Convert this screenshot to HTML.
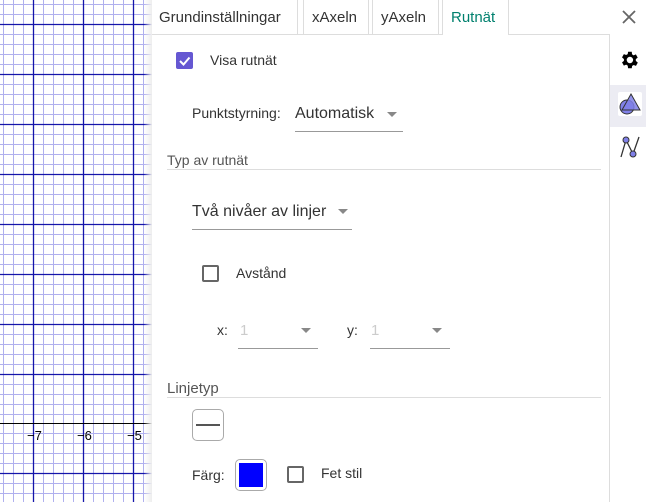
<!DOCTYPE html>
<html><head><meta charset="utf-8"><style>
body{margin:0;width:646px;height:502px;overflow:hidden;background:#fff;font-family:"Liberation Sans",Arial,sans-serif;position:relative;color:#333}
.a{position:absolute}
.t{font-size:14px;color:#333}
.cb{position:absolute;width:15px;height:15px;border:2px solid #666;border-radius:2px;box-sizing:border-box}
.dd{position:absolute;border-bottom:1px solid #999}
.arr{position:absolute;width:0;height:0;border-left:5px solid transparent;border-right:5px solid transparent;border-top:5px solid #888}
.hl{position:absolute;height:1px;background:#ddd;left:167px;width:434px}
</style></head><body>
<svg class="a" style="left:0;top:0" width="152" height="502">
<g stroke="#b0b0ee" stroke-width="1">
<path d="M3.5 0V502M13.5 0V502M23.5 0V502M43.5 0V502M53.5 0V502M63.5 0V502M73.5 0V502M93.5 0V502M103.5 0V502M113.5 0V502M123.5 0V502M143.5 0V502"/>
<path d="M0 4.5H152M0 14.5H152M0 34.5H152M0 44.5H152M0 54.5H152M0 64.5H152M0 84.5H152M0 94.5H152M0 104.5H152M0 114.5H152M0 134.5H152M0 144.5H152M0 154.5H152M0 164.5H152M0 184.5H152M0 194.5H152M0 204.5H152M0 214.5H152M0 234.5H152M0 244.5H152M0 254.5H152M0 264.5H152M0 284.5H152M0 294.5H152M0 304.5H152M0 314.5H152M0 334.5H152M0 344.5H152M0 354.5H152M0 364.5H152M0 384.5H152M0 394.5H152M0 404.5H152M0 414.5H152M0 433.5H152M0 443.5H152M0 453.5H152M0 463.5H152M0 483.5H152M0 493.5H152"/>
</g>
<g stroke="#1515aa" stroke-width="1.3">
<path d="M33.5 0V502M83.5 0V502M133.5 0V502"/>
<path d="M0 24.5H152M0 74.5H152M0 124.5H152M0 174.5H152M0 224.5H152M0 274.5H152M0 324.5H152M0 374.5H152M0 473.5H152"/>
</g>
<path d="M0 423.5H152" stroke="#000" stroke-width="1"/>
<g font-size="13" fill="#000" font-family="Liberation Sans,sans-serif">
<text x="27" y="440">−7</text><text x="77" y="440">−6</text><text x="127" y="440">−5</text>
</g>
</svg>
<div class="a" style="left:144px;top:0;width:8px;height:502px;background:linear-gradient(to right,rgba(255,255,255,0),#eee)"></div>
<div class="a" style="left:152px;top:0;width:494px;height:502px;background:#fff"></div>
<div class="a" style="left:152px;top:34px;width:458px;height:1px;background:#ddd"></div>
<div class="a" style="left:152px;top:0;width:145px;height:34px;border-right:1px solid #ddd"></div>
<div class="a" style="left:303px;top:0;width:64px;height:34px;border-left:1px solid #ddd;border-right:1px solid #ddd"></div>
<div class="a" style="left:372px;top:0;width:65px;height:34px;border-left:1px solid #ddd;border-right:1px solid #ddd"></div>
<div class="a" style="left:442px;top:0;width:65px;height:35px;border-left:1px solid #ddd;border-right:1px solid #ddd;background:#fff"></div>
<div class="a" style="left:609px;top:34px;width:1px;height:468px;background:#ddd"></div>
<div class="a" style="left:159px;top:9px;font-size:15px;color:#333">Grundinställningar</div>
<div class="a" style="left:312px;top:9px;font-size:15px;color:#333">xAxeln</div>
<div class="a" style="left:381px;top:9px;font-size:15px;color:#333">yAxeln</div>
<div class="a" style="left:451px;top:9px;font-size:15px;color:#00806e">Rutnät</div>
<svg class="a" style="left:621px;top:9px" width="16" height="16"><path d="M2 2L14 14M14 2L2 14" stroke="#666" stroke-width="1.8"/></svg>
<svg class="a" style="left:618px;top:49px" width="22" height="22" viewBox="0 0 24 24"><path fill="#000" d="M19.4 13a7.5 7.5 0 0 0 0-2l2.1-1.6-2-3.5-2.5 1a7 7 0 0 0-1.7-1L15 3h-4l-.4 2.6a7 7 0 0 0-1.7 1l-2.5-1-2 3.5L6.5 11a7.5 7.5 0 0 0 0 2l-2.1 1.6 2 3.5 2.5-1a7 7 0 0 0 1.7 1L11 21h4l.4-2.6a7 7 0 0 0 1.7-1l2.5 1 2-3.5zM13 15.5a3.5 3.5 0 1 1 0-7 3.5 3.5 0 0 1 0 7z"/></svg>
<div class="a" style="left:610px;top:85px;width:36px;height:42px;background:#ececf3"></div>
<svg class="a" style="left:617px;top:91px" width="26" height="26"><rect x="1" y="1" width="24" height="24" rx="2" fill="#fff"/><circle cx="10" cy="16" r="7" fill="#8080e8" stroke="#333" stroke-width="1"/><path d="M14 3L23 19H5Z" fill="#8080e8" stroke="#333" stroke-width="1" fill-opacity=".85"/></svg>
<svg class="a" style="left:619px;top:135px" width="22" height="24"><path d="M2 22L7 5L14 19L20 2" fill="none" stroke="#333" stroke-width="1.3"/><circle cx="7" cy="5" r="3" fill="#8080e8" stroke="#333"/><circle cx="14" cy="19" r="3" fill="#8080e8" stroke="#333"/></svg>
<div class="a" style="left:176px;top:52px;width:17px;height:17px;border-radius:2px;background:#6557d2"></div>
<svg class="a" style="left:176px;top:52px" width="17" height="17"><path d="M4 9L7.5 12.5L13.5 5.5" fill="none" stroke="#fff" stroke-width="2"/></svg>
<div class="a t" style="left:210px;top:52px">Visa rutnät</div>
<div class="a t" style="left:192px;top:105px">Punktstyrning:</div>
<div class="dd" style="left:295px;top:100px;width:108px;height:31px"></div>
<div class="a" style="left:295px;top:105px;font-size:16px;color:#333">Automatisk</div>
<div class="arr" style="left:387px;top:112px"></div>
<div class="a" style="left:167px;top:152px;font-size:14px;color:#555">Typ av rutnät</div>
<div class="hl" style="top:169px"></div>
<div class="dd" style="left:192px;top:196px;width:160px;height:33px"></div>
<div class="a" style="left:192px;top:203px;font-size:16px;color:#333">Två nivåer av linjer</div>
<div class="arr" style="left:338px;top:209px"></div>
<div class="cb" style="left:202px;top:265px;width:17px;height:17px"></div>
<div class="a t" style="left:236px;top:265px">Avstånd</div>
<div class="a t" style="left:217px;top:322px">x:</div>
<div class="dd" style="left:238px;top:315px;width:80px;height:33px"></div>
<div class="a" style="left:240px;top:322px;font-size:15px;color:#ccc">1</div>
<div class="arr" style="left:301px;top:328px"></div>
<div class="a t" style="left:347px;top:322px">y:</div>
<div class="dd" style="left:370px;top:315px;width:80px;height:33px"></div>
<div class="a" style="left:371px;top:322px;font-size:15px;color:#ccc">1</div>
<div class="arr" style="left:432px;top:328px"></div>
<div class="a" style="left:167px;top:380px;font-size:15px;color:#555">Linjetyp</div>
<div class="hl" style="top:397px"></div>
<div class="a" style="left:192px;top:409px;width:32px;height:32px;border:1px solid #aaa;border-radius:5px;box-sizing:border-box"></div>
<div class="a" style="left:196px;top:424px;width:24px;height:2px;background:#555"></div>
<div class="a t" style="left:192px;top:467px">Färg:</div>
<div class="a" style="left:235px;top:459px;width:32px;height:32px;border:1px solid #aaa;border-radius:5px;box-sizing:border-box;background:#fff"></div>
<div class="a" style="left:239px;top:463px;width:24px;height:24px;background:#0000ff"></div>
<div class="cb" style="left:287px;top:466px;width:17px;height:17px"></div>
<div class="a t" style="left:321px;top:465px">Fet stil</div>
</body></html>
